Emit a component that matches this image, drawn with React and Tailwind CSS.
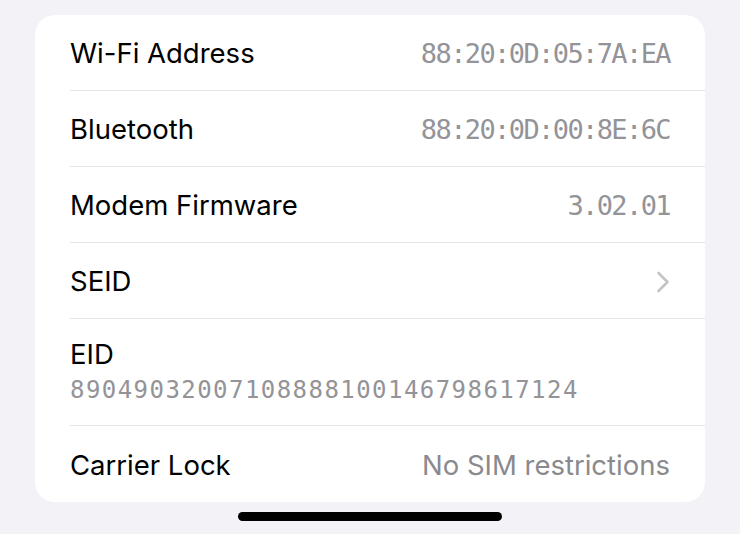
import React from 'react'

const rows = [
  { label: 'Wi-Fi Address', value: '88:20:0D:05:7A:EA' },
  { label: 'Bluetooth', value: '88:20:0D:00:8E:6C' },
  { label: 'Modem Firmware', value: '3.02.01' },
  { label: 'SEID', chevron: true },
]

function Chevron() {
  return (
    <svg width="14" height="24" viewBox="0 0 14 24" fill="none">
      <path d="M2.5 3l9 9-9 9" stroke="#c4c4c7" strokeWidth="2.6" strokeLinecap="round" strokeLinejoin="round" />
    </svg>
  )
}

export default function App() {
  return (
    <div className="h-[534px] w-[740px] bg-[#f2f2f7] pt-[15px] font-['Inter',sans-serif] text-black">
      <div className="ml-[35px] w-[670px] rounded-[20px] bg-white pl-[35px]">
        {rows.map(r => (
          <div key={r.label} className="flex h-[76px] items-center justify-between border-b border-[#e3e3e8] pt-[3px] pr-[35px]">
            <span className="text-[27.5px]">{r.label}</span>
            {r.value && (
              <span className="font-['DejaVu_Sans_Mono',monospace] text-[27px] tracking-[-1.6px] text-[#939398]">{r.value}</span>
            )}
            {r.chevron && <Chevron />}
          </div>
        ))}
        <div className="flex h-[107px] flex-col justify-center border-b border-[#e3e3e8] pb-[3px] pr-[35px]">
          <span className="text-[27.5px] leading-[36px]">EID</span>
          <span className="mt-[3px] font-['DejaVu_Sans_Mono',monospace] text-[24px] leading-[30px] tracking-[1.45px] text-[#939398]">
            89049032007108888100146798617124
          </span>
        </div>
        <div className="flex h-[76px] items-center justify-between pt-[3px] pr-[35px]">
          <span className="text-[27.5px]">Carrier Lock</span>
          <span className="text-[27.5px] text-[#8a8a8e]">No SIM restrictions</span>
        </div>
      </div>
      <div className="mt-[10px] flex justify-center">
        <div className="h-[9px] w-[264px] rounded-full bg-black" />
      </div>
    </div>
  )
}
